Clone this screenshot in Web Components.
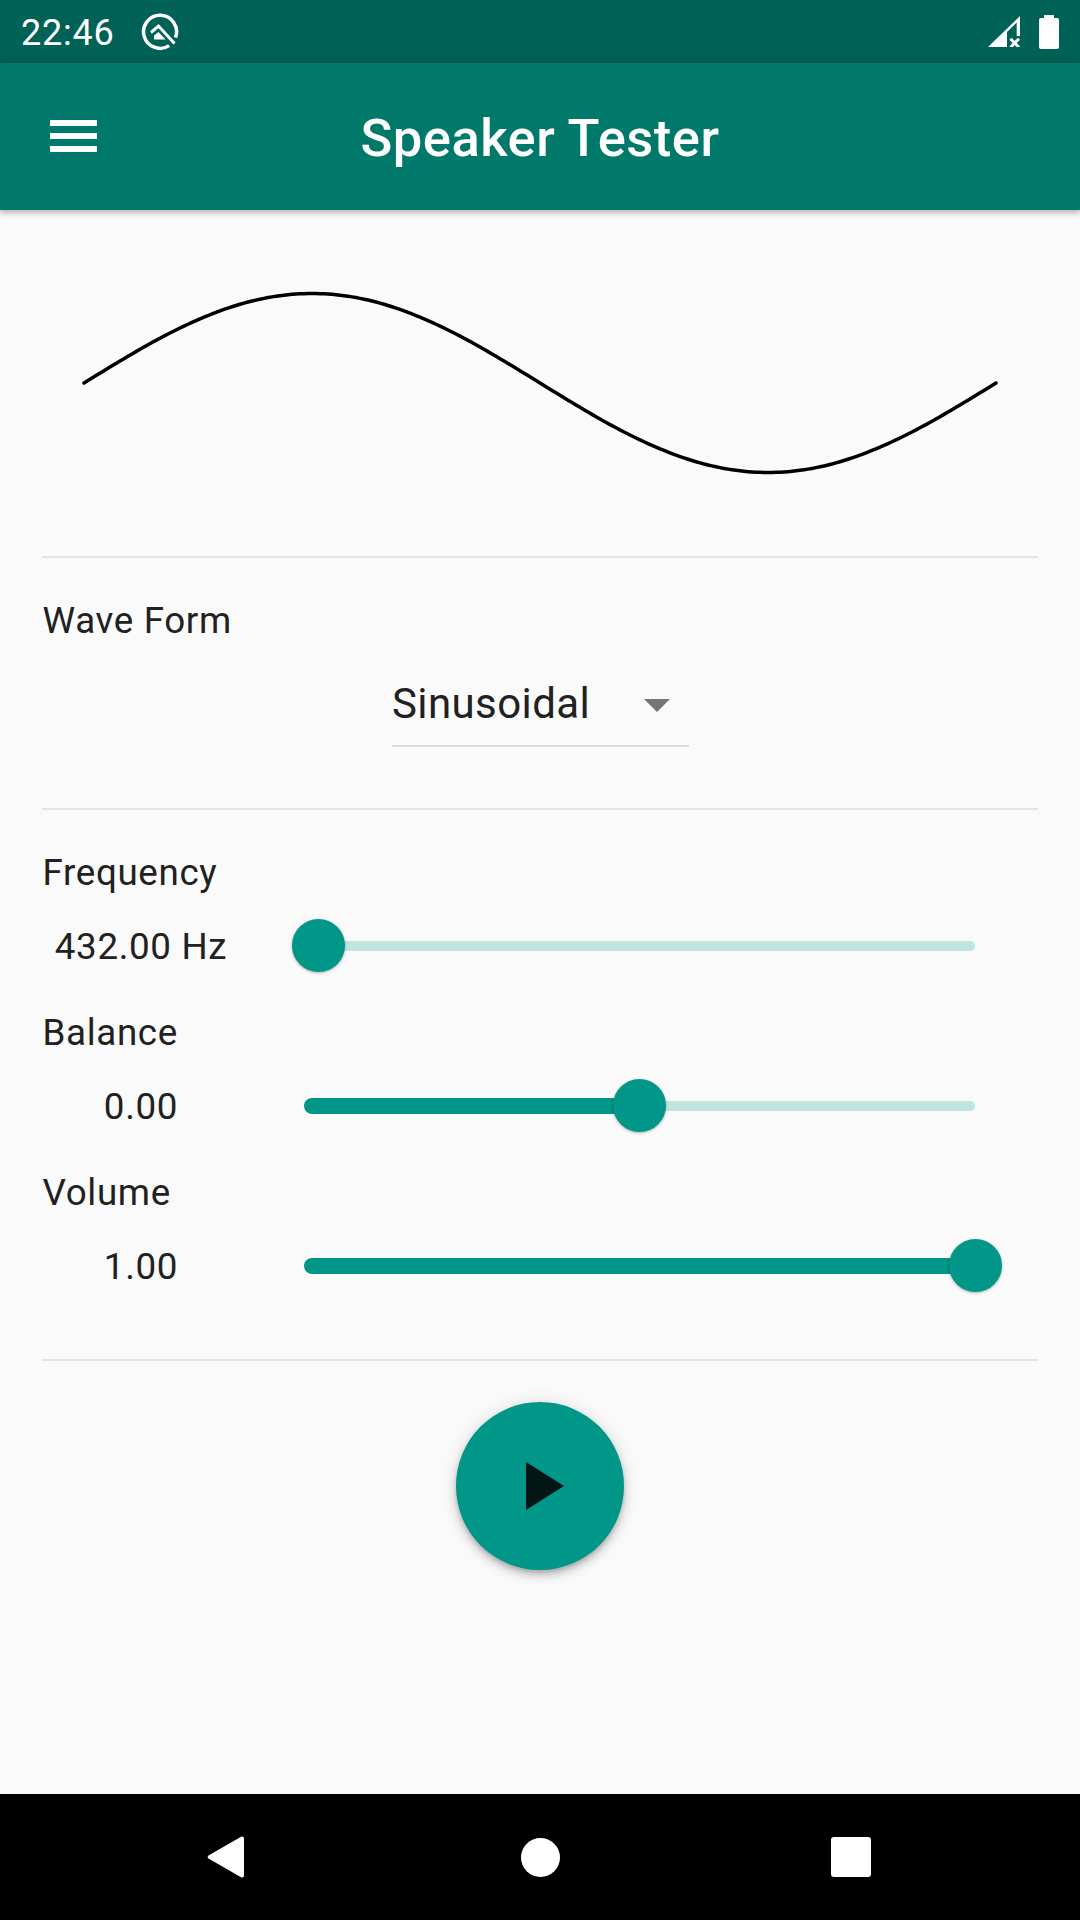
<!DOCTYPE html>
<html>
<head>
<meta charset="utf-8">
<style>
html, body { margin: 0; padding: 0; height: 100%; }
body { font-family: Roboto, sans-serif; background: #fafafa; }
speaker-app { height: 1920px; }
</style>
</head>
<body>
<speaker-app></speaker-app>
<script>
class StatusBar extends HTMLElement {
	constructor() {
		super()
		this.attachShadow({ mode: "open" }).innerHTML = `
<style>
:host { display: flex; align-items: center; height: 63px; background: #006156; color: #fff; padding: 0 21px 0 21px; box-sizing: border-box; }
.time { font-size: 36px; line-height: 63px; letter-spacing: 0.8px; width: 120px; padding-top: 3px; }
svg { display: block; }
.gap { flex: 1; }
.signal { margin-right: 19px; }
</style>
<span class="time">22:46</span>
<svg class="q" width="38" height="38" viewBox="0 0 38 38" fill="none" stroke="#fff">
	<path d="M28.100 32.600A16.500 16.500 0 1 1 34.500 24.600" stroke-width="3.500"/>
	<path d="M10 19.500 17.500 13 33.500 30.500" stroke-width="3"/>
	<path d="M13 26.500V22.500L17.500 19 24.500 26.500z" fill="#fff" stroke="none"/>
</svg>
<span class="gap"></span>
<svg class="signal" width="32" height="31" viewBox="0 0 32 31" fill="#fff">
	<path d="M32 0 0 31H19V16L28.700 6.400V20H32z"/>
	<path d="M22.500 22.700 31 31.300M31 22.700 22.500 31.300" fill="none" stroke="#fff" stroke-width="3"/>
</svg>
<svg width="20" height="34" viewBox="0 0 20 34" fill="#fff">
	<path d="M5 0h10v3h3a2 2 0 0 1 2 2v27a2 2 0 0 1-2 2H2a2 2 0 0 1-2-2V5a2 2 0 0 1 2-2h3z"/>
</svg>
`
	}
}

class AppBar extends HTMLElement {
	constructor() {
		super()
		this.attachShadow({ mode: "open" }).innerHTML = `
<style>
:host { display: grid; grid-template-columns: 1fr auto 1fr; align-items: center; height: 147px; background: #00796b; color: #fff; position: relative; z-index: 1;
	box-shadow: 0 3px 5px rgba(0,0,0,.2), 0 1px 10px rgba(0,0,0,.12); }
.menu { display: flex; flex-direction: column; gap: 7px; width: 47px; margin-left: 50px; margin-top: -1px; }
.menu i { display: block; height: 6px; background: #fff; }
.title { font-size: 52.5px; font-weight: 500; line-height: 143px; padding-top: 4px; letter-spacing: 0.5px; }
</style>
<div class="menu"><i></i><i></i><i></i></div>
<div class="title"><slot></slot></div>
`
	}
}

class WaveView extends HTMLElement {
	constructor() {
		super()
		const points = []
		for (let x = 0; x <= 912; x += 4) {
			const y = 173 - 89.5 * Math.sin((x / 912) * 2 * Math.PI)
			points.push(`${x + 84},${y.toFixed(2)}`)
		}
		this.attachShadow({ mode: "open" }).innerHTML = `
<style>
:host { display: block; height: 346px; }
svg { display: block; }
</style>
<svg width="1080" height="346" viewBox="0 0 1080 346">
	<polyline points="${points.join(" ")}" fill="none" stroke="#000" stroke-width="3.500" stroke-linecap="round"/>
</svg>
`
	}
}

class SectionRule extends HTMLElement {
	constructor() {
		super()
		this.attachShadow({ mode: "open" }).innerHTML = `
<style>
:host { display: block; height: 2px; margin: 0 42px; background: #e4e4e4; }
</style>
`
	}
}

class WaveSelect extends HTMLElement {
	constructor() {
		super()
		this.attachShadow({ mode: "open" }).innerHTML = `
<style>
:host { display: flex; justify-content: space-between; align-items: center; box-sizing: border-box; width: 297px; height: 83px; padding-bottom: 3px; border-bottom: 2px solid #dcdcdc; font-size: 42px; color: #212121; letter-spacing: 0.4px; }
.caret { width: 0; height: 0; border: 13px solid transparent; border-top: 13px solid #757575; border-bottom: 0; margin: 5px 19px 0 0; }
</style>
<span><slot></slot></span>
<span class="caret"></span>
`
	}
}

class ToneSlider extends HTMLElement {
	constructor() {
		super()
		const value = Number(this.getAttribute("value") || 0)
		const label = this.getAttribute("label")
		const reading = this.getAttribute("reading")
		const pos = value * 671
		this.attachShadow({ mode: "open" }).innerHTML = `
<style>
:host { display: block; color: #212121; font-size: 36.75px; letter-spacing: 0.65px; margin-bottom: 15px; }
.label { padding-left: 42.500px; height: 52px; line-height: 52px; }
.row { display: flex; align-items: center; height: 93px; }
.reading { width: 282px; margin-right: 22px; padding-top: 1px; text-align: center; }
.track { position: relative; width: 671px; height: 10px; background: #bfe5e1; border-radius: 5px; }
.fill { position: absolute; left: 0; top: -3px; height: 16px; width: ${pos}px; background: #009688; border-radius: 8px; }
.thumb { position: absolute; left: ${pos - 26.5}px; top: -21.5px; width: 53px; height: 53px; border-radius: 50%; background: #009688; box-shadow: 0 1px 3px rgba(0,0,0,.3); }
</style>
<div class="label">${label}</div>
<div class="row">
	<div class="reading">${reading}</div>
	<div class="track">
		<div class="fill"></div>
		<div class="thumb"></div>
	</div>
</div>
`
	}
}

class PlayButton extends HTMLElement {
	constructor() {
		super()
		this.attachShadow({ mode: "open" }).innerHTML = `
<style>
:host { display: flex; align-items: center; justify-content: center; width: 168px; height: 168px; border-radius: 50%; background: #009688;
	box-shadow: 0 3px 5px -1px rgba(0,0,0,.2), 0 6px 10px 0 rgba(0,0,0,.14), 0 1px 18px 0 rgba(0,0,0,.12); }
svg { display: block; margin-left: 10px; }
</style>
<svg width="38" height="48" viewBox="0 0 38 48"><path d="M0 0 38 24 0 48z" fill="#021614"/></svg>
`
	}
}

class NavBar extends HTMLElement {
	constructor() {
		super()
		this.attachShadow({ mode: "open" }).innerHTML = `
<style>
:host { display: flex; align-items: center; justify-content: space-between; height: 126px; background: #000; padding: 0 209px 0 207px; box-sizing: border-box; }
svg { display: block; }
.home { margin-left: 5px; }
</style>
<svg width="37" height="42" viewBox="0 0 38 42" preserveAspectRatio="none"><path d="M35 .7a2 2 0 0 1 3 1.600v37.400a2 2 0 0 1-3 1.600L1.500 22.600a2 2 0 0 1 0-3.200z" fill="#fff"/></svg>
<svg class="home" width="39" height="39" viewBox="0 0 39 39"><circle cx="19.500" cy="19.500" r="19.500" fill="#fff"/></svg>
<svg width="40" height="40" viewBox="0 0 40 40"><rect width="40" height="40" rx="3" fill="#fff"/></svg>
`
	}
}

class SpeakerApp extends HTMLElement {
	constructor() {
		super()
		this.attachShadow({ mode: "open" }).innerHTML = `
<style>
:host { display: flex; flex-direction: column; font-family: Roboto, sans-serif; background: #fafafa; }
main { flex: 1; display: flex; flex-direction: column; }
.wave-label { padding: 39px 0 0 42.500px; height: 47px; line-height: 47px; font-size: 36.75px; letter-spacing: 0.65px; color: #212121; }
.select { display: flex; justify-content: center; padding: 20px 0 61px 1px; }
.sliders { padding: 37px 0 0; height: 549px; box-sizing: border-box; display: flex; flex-direction: column; }
.play { display: flex; justify-content: center; padding-top: 41px; }
</style>
<status-bar></status-bar>
<app-bar>Speaker Tester</app-bar>
<main>
	<wave-view></wave-view>
	<section-rule></section-rule>
	<div class="wave-label">Wave Form</div>
	<div class="select"><wave-select>Sinusoidal</wave-select></div>
	<section-rule></section-rule>
	<div class="sliders">
		<tone-slider label="Frequency" reading="432.00 Hz" value="0.021"></tone-slider>
		<tone-slider label="Balance" reading="0.00" value="0.5"></tone-slider>
		<tone-slider label="Volume" reading="1.00" value="1"></tone-slider>
	</div>
	<section-rule></section-rule>
	<div class="play"><play-button></play-button></div>
</main>
<nav-bar></nav-bar>
`
	}
}

customElements.define("status-bar", StatusBar)
customElements.define("app-bar", AppBar)
customElements.define("wave-view", WaveView)
customElements.define("section-rule", SectionRule)
customElements.define("wave-select", WaveSelect)
customElements.define("tone-slider", ToneSlider)
customElements.define("play-button", PlayButton)
customElements.define("nav-bar", NavBar)
customElements.define("speaker-app", SpeakerApp)
</script>
</body>
</html>
